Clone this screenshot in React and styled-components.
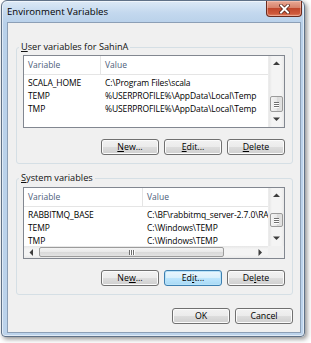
import React from 'react';
import styled, { createGlobalStyle } from 'styled-components';

const GlobalStyle = createGlobalStyle`
  html, body {
    margin: 0;
    padding: 0;
    background: #ffffff;
  }
  body {
    font-family: "Open Sans", "Noto Sans", "Liberation Sans", sans-serif;
    font-size: 8.5px;
    color: #000;
  }
`;

const Stage = styled.div`
  width: 311px;
  height: 343px;
  overflow: hidden;
`;

const Window = styled.div`
  box-sizing: border-box;
  width: 304px;
  height: 337px;
  margin-left: 1px;
  border: 1px solid #5f7187;
  border-radius: 6px 6px 4px 4px;
  background: linear-gradient(180deg, #dce9f6 0, #c3d8ee 12px, #b9d1ea 22px, #bcd3eb 100%);
  box-shadow: 2px 2px 5px rgba(0, 0, 0, 0.45), inset 0 0 0 1px rgba(255, 255, 255, 0.55);
  display: flex;
  flex-direction: column;
`;

const TitleBar = styled.div`
  height: 21px;
  display: flex;
  align-items: flex-start;
  justify-content: space-between;
  padding-left: 5px;
`;

const Title = styled.div`
  margin-top: 5px;
  font-size: 9.6px;
  line-height: 12px;
  color: #000;
`;

const CloseButton = styled.div`
  box-sizing: border-box;
  width: 36px;
  height: 16px;
  margin-right: 2px;
  border: 1px solid #6a2a1d;
  border-top: none;
  border-radius: 0 0 4px 4px;
  background: linear-gradient(180deg, #e8a995 0%, #d7826b 45%, #c0472c 50%, #cf5a3c 85%, #e08a6a 100%);
  box-shadow: inset 0 0 0 1px rgba(255, 210, 200, 0.45);
  display: flex;
  align-items: center;
  justify-content: center;
`;

const Client = styled.div`
  flex: 1;
  margin: 0 3px 3px 5px;
  border: 1px solid #8c9fb6;
  background: #f0f0f0;
  display: flex;
  flex-direction: column;
`;

const Group = styled.fieldset`
  box-sizing: border-box;
  width: 277px;
  margin: ${({ top }) => top}px 0 0 8px;
  padding: ${({ padTop }) => padTop}px 7px 8px 6px;
  border: 1px solid #d5dfe5;
  border-radius: 3px;
  min-width: 0;
`;

const Legend = styled.legend`
  margin-left: -4px;
  padding: 0 2px;
  font-size: 9.2px;
  line-height: 12px;
  color: #111;
`;

const ListBox = styled.div`
  box-sizing: border-box;
  height: ${({ h }) => h}px;
  border: 1px solid #828790;
  background: #fff;
  display: flex;
  flex-direction: column;
  overflow: hidden;
`;

const ListBody = styled.div`
  flex: 1;
  min-height: 0;
  display: flex;
`;

const ListMain = styled.div`
  flex: 1;
  min-width: 0;
  overflow: hidden;
`;

const Header = styled.div`
  height: 18px;
  border-bottom: 1px solid #e5e5e5;
  display: grid;
  grid-template-columns: ${({ col }) => col}px 1fr;
  margin-bottom: 1px;
`;

const HeaderCell = styled.div`
  padding-left: 4px;
  line-height: 18px;
  color: #4c607a;
  white-space: nowrap;
  border-right: ${({ last }) => (last ? 'none' : '1px solid #e5e5e5')};
`;

const Row = styled.div`
  height: 13px;
  display: grid;
  grid-template-columns: ${({ col }) => col}px 1fr;
`;

const Cell = styled.div`
  padding-left: 4px;
  line-height: 13px;
  white-space: nowrap;
  overflow: hidden;
  letter-spacing: -0.1px;
`;

const VScroll = styled.div`
  width: 15px;
  display: flex;
  flex-direction: column;
  background: linear-gradient(90deg, #e6e6e6 0, #f4f4f4 3px, #f4f4f4 12px, #e9e9e9 15px);
  border-left: 1px solid #ececec;
`;

const HScroll = styled.div`
  height: 12px;
  display: flex;
`;

const HTrack = styled.div`
  flex: 1;
  display: flex;
  background: linear-gradient(180deg, #e6e6e6 0, #f4f4f4 3px, #f4f4f4 9px, #e9e9e9 12px);
`;

const ArrowCell = styled.div`
  flex: 0 0 ${({ size }) => size}px;
  display: flex;
  align-items: center;
  justify-content: center;
`;

const Track = styled.div`
  flex: 1;
  display: flex;
  flex-direction: column;
  justify-content: ${({ end }) => (end ? 'flex-end' : 'flex-start')};
`;

const Spacer = styled.div`
  flex: 1;
`;

const VThumb = styled.div`
  box-sizing: border-box;
  height: ${({ h }) => h}px;
  margin: ${({ offset }) => offset}px 1px 0;
  border: 1px solid #9b9b9b;
  border-radius: 2px;
  background: linear-gradient(90deg, #f4f4f4 0%, #e8e8e8 50%, #d9d9d9 51%, #e2e2e2 100%);
  display: flex;
  flex-direction: column;
  align-items: center;
  justify-content: center;
  gap: 1px;
`;

const HThumb = styled.div`
  box-sizing: border-box;
  width: ${({ w }) => w}px;
  margin: 1px 0;
  border: 1px solid #9b9b9b;
  border-radius: 2px;
  background: linear-gradient(180deg, #f4f4f4 0%, #e8e8e8 50%, #d9d9d9 51%, #e2e2e2 100%);
  display: flex;
  align-items: center;
  justify-content: center;
  gap: 1px;
`;

const GripV = styled.span`
  width: 5px;
  height: 1px;
  background: #6f6f6f;
  box-shadow: 0 1px 0 #fff;
`;

const GripH = styled.span`
  width: 1px;
  height: 5px;
  background: #6f6f6f;
  box-shadow: 1px 0 0 #fff;
`;

const Corner = styled.div`
  width: 16px;
  background: #f0f0f0;
`;

const ButtonRow = styled.div`
  display: flex;
  justify-content: flex-end;
  gap: 5px;
  margin-top: ${({ top }) => top}px;
  margin-right: ${({ right }) => right || 0}px;
`;

const Button = styled.div`
  box-sizing: border-box;
  width: 58px;
  height: 16px;
  border: 1px solid ${({ focused }) => (focused ? '#3c7fb1' : '#707070')};
  border-radius: 3px;
  background: ${({ focused }) =>
    focused
      ? 'linear-gradient(180deg, #eaf6fd 0%, #d9f0fc 50%, #bee6fd 51%, #a7d9f5 100%)'
      : 'linear-gradient(180deg, #f2f2f2 0%, #ebebeb 50%, #dddddd 51%, #cfcfcf 100%)'};
  box-shadow: inset 0 0 0 1px ${({ focused }) => (focused ? '#b8e2f8' : '#fbfbfb')};
  display: flex;
  align-items: center;
  justify-content: center;
  font-size: 8.8px;
  line-height: 14px;
  color: #000;
`;

const Arrow = ({ dir }) => {
  const pts = {
    up: '0,4 3.5,0.5 7,4',
    down: '0,0.5 3.5,4 7,0.5',
    left: '4,0 0.5,3.5 4,7',
    right: '0.5,0 4,3.5 0.5,7',
  }[dir];
  const vertical = dir === 'up' || dir === 'down';
  return (
    <svg width={vertical ? 7 : 5} height={vertical ? 5 : 7} viewBox={vertical ? '0 0 7 5' : '0 0 5 7'}>
      <polygon points={pts} fill="#3d3d3d" />
    </svg>
  );
};

const CloseGlyph = () => (
  <svg width="11" height="10" viewBox="0 0 11 10">
    <path d="M2 1.5 L9 8.5 M9 1.5 L2 8.5" stroke="#4a1a10" strokeWidth="3.4" strokeLinecap="square" />
    <path d="M2 1.5 L9 8.5 M9 1.5 L2 8.5" stroke="#ffffff" strokeWidth="2" strokeLinecap="square" />
  </svg>
);

const VerticalBar = ({ thumb, offset, end }) => (
  <VScroll>
    <ArrowCell size={15}>
      <Arrow dir="up" />
    </ArrowCell>
    <Track end={end}>
      <VThumb h={thumb} offset={offset}>
        <GripV />
        <GripV />
        <GripV />
      </VThumb>
    </Track>
    <ArrowCell size={15}>
      <Arrow dir="down" />
    </ArrowCell>
  </VScroll>
);

const userVars = [
  ['SCALA_HOME', 'C:\\Program Files\\scala'],
  ['TEMP', '%USERPROFILE%\\AppData\\Local\\Temp'],
  ['TMP', '%USERPROFILE%\\AppData\\Local\\Temp'],
];

const systemVars = [
  ['RABBITMQ_BASE', 'C:\\BF\\rabbitmq_server-2.7.0\\RA'],
  ['TEMP', 'C:\\Windows\\TEMP'],
  ['TMP', 'C:\\Windows\\TEMP'],
];

const VarList = ({ rows, col, h, horizontal, thumb, offset, end }) => (
  <ListBox h={h}>
    <ListBody>
      <ListMain>
        <Header col={col}>
          <HeaderCell>Variable</HeaderCell>
          <HeaderCell last>Value</HeaderCell>
        </Header>
        {rows.map(([name, value]) => (
          <Row col={col} key={name}>
            <Cell>{name}</Cell>
            <Cell>{value}</Cell>
          </Row>
        ))}
      </ListMain>
      <VerticalBar thumb={thumb} offset={offset} end={end} />
    </ListBody>
    {horizontal && (
      <HScroll>
        <HTrack>
          <ArrowCell size={15}>
            <Arrow dir="left" />
          </ArrowCell>
          <HThumb w={185}>
            <GripH />
            <GripH />
            <GripH />
          </HThumb>
          <Spacer />
          <ArrowCell size={15}>
            <Arrow dir="right" />
          </ArrowCell>
        </HTrack>
        <Corner />
      </HScroll>
    )}
  </ListBox>
);

const App = () => (
  <Stage>
    <GlobalStyle />
    <Window>
      <TitleBar>
        <Title>Environment Variables</Title>
        <CloseButton>
          <CloseGlyph />
        </CloseButton>
      </TitleBar>
      <Client>
        <Group top={18} padTop={2}>
          <Legend>
            <u>U</u>ser variables for SahinA
          </Legend>
          <VarList rows={userVars} col={77} h={73} thumb={16} offset={0} end />
          <ButtonRow top={11}>
            <Button>
              <span><u>N</u>ew...</span>
            </Button>
            <Button>
              <span><u>E</u>dit...</span>
            </Button>
            <Button>
              <span><u>D</u>elete</span>
            </Button>
          </ButtonRow>
        </Group>
        <Group top={8} padTop={3}>
          <Legend>
            <u>S</u>ystem variables
          </Legend>
          <VarList rows={systemVars} col={119} h={72} horizontal thumb={14} offset={10} />
          <ButtonRow top={11}>
            <Button>
              <span>Ne<u>w</u>...</span>
            </Button>
            <Button focused>
              <span>Ed<u>i</u>t...</span>
            </Button>
            <Button>
              <span>De<u>l</u>ete</span>
            </Button>
          </ButtonRow>
        </Group>
        <ButtonRow top={13} right={7}>
          <Button>OK</Button>
          <Button>Cancel</Button>
        </ButtonRow>
      </Client>
    </Window>
  </Stage>
);

export default App;
